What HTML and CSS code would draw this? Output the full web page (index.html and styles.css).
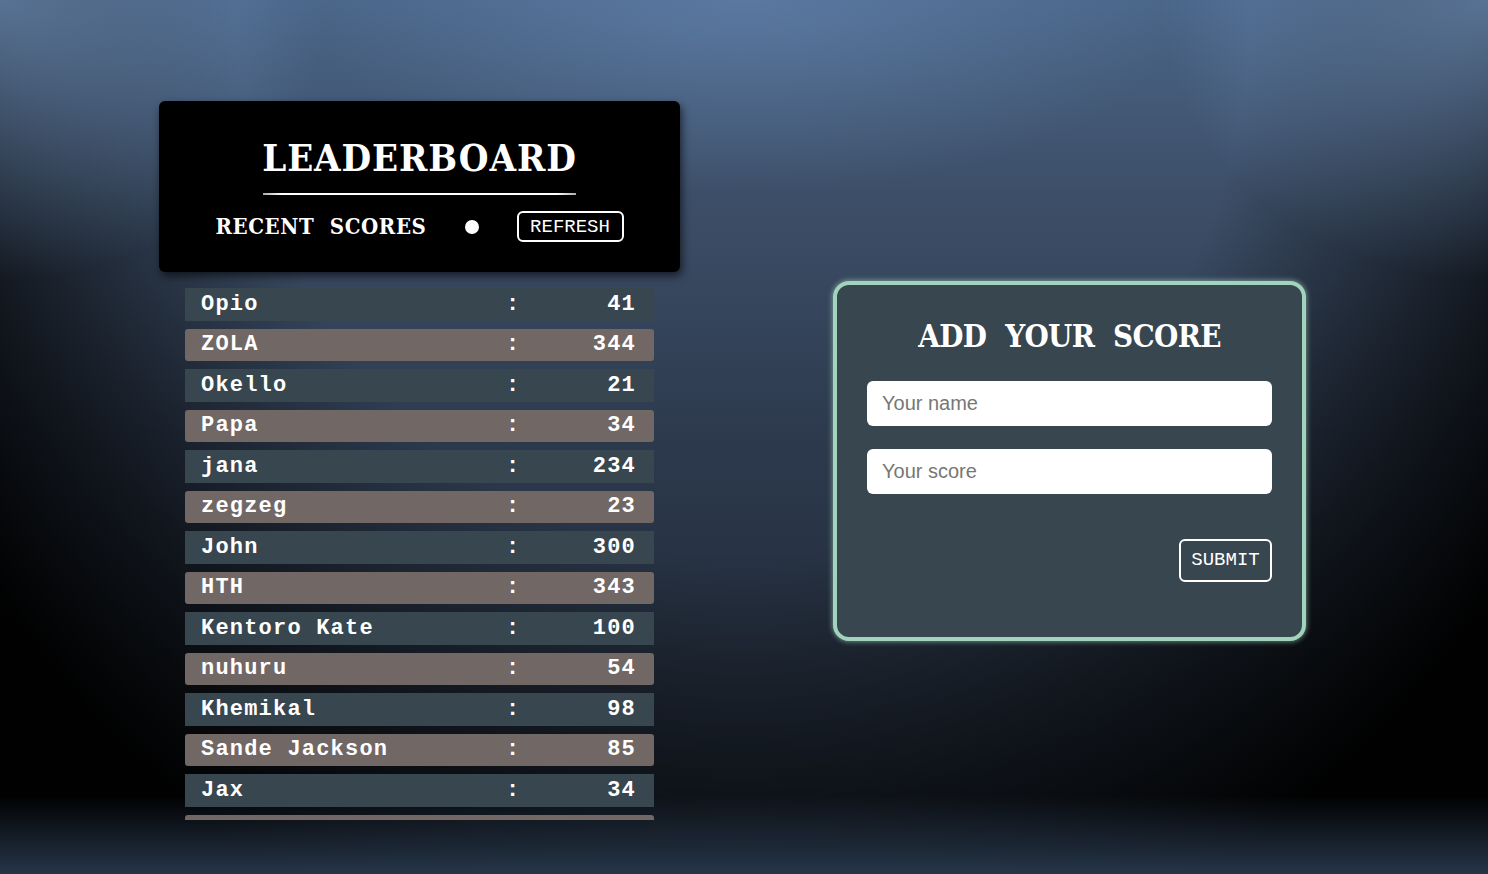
FILE: index.html
```html
<!DOCTYPE html>
<html lang="en">
<head>
<meta charset="utf-8">
<title>Leaderboard</title>
<link rel="stylesheet" href="styles.css">
</head>
<body>
<main class="page">
  <section class="board">
    <header class="board-head">
      <h1 class="board-title">LEADERBOARD</h1>
      <div class="title-rule"></div>
      <div class="recent-bar">
        <h2 class="recent-title">RECENT SCORES</h2>
        <span class="dot"></span>
        <button class="btn refresh" type="button">REFRESH</button>
      </div>
    </header>
    <ul class="scores">
      <li class="score-row"><span class="name">Opio</span><span class="sep">:</span><span class="pts">41</span></li>
      <li class="score-row"><span class="name">ZOLA</span><span class="sep">:</span><span class="pts">344</span></li>
      <li class="score-row"><span class="name">Okello</span><span class="sep">:</span><span class="pts">21</span></li>
      <li class="score-row"><span class="name">Papa</span><span class="sep">:</span><span class="pts">34</span></li>
      <li class="score-row"><span class="name">jana</span><span class="sep">:</span><span class="pts">234</span></li>
      <li class="score-row"><span class="name">zegzeg</span><span class="sep">:</span><span class="pts">23</span></li>
      <li class="score-row"><span class="name">John</span><span class="sep">:</span><span class="pts">300</span></li>
      <li class="score-row"><span class="name">HTH</span><span class="sep">:</span><span class="pts">343</span></li>
      <li class="score-row"><span class="name">Kentoro Kate</span><span class="sep">:</span><span class="pts">100</span></li>
      <li class="score-row"><span class="name">nuhuru</span><span class="sep">:</span><span class="pts">54</span></li>
      <li class="score-row"><span class="name">Khemikal</span><span class="sep">:</span><span class="pts">98</span></li>
      <li class="score-row"><span class="name">Sande Jackson</span><span class="sep">:</span><span class="pts">85</span></li>
      <li class="score-row"><span class="name">Jax</span><span class="sep">:</span><span class="pts">34</span></li>
      <li class="score-row score-row--peek" aria-hidden="true"></li>
    </ul>
  </section>
  <section class="add-card">
    <h2 class="add-title">ADD YOUR SCORE</h2>
    <form class="add-form">
      <input class="field" type="text" placeholder="Your name">
      <input class="field" type="text" placeholder="Your score">
      <div class="actions">
        <button class="btn submit" type="button">SUBMIT</button>
      </div>
    </form>
  </section>
</main>
</body>
</html>
```
FILE: styles.css
```css
* { box-sizing: border-box; }

html, body {
  margin: 0;
  height: 100%;
}

body {
  overflow: hidden;
  color: #fff;
  font-family: "Courier New", "Nimbus Mono PS", "FreeMono", "Liberation Mono", monospace;
  background:
    radial-gradient(ellipse 22% 32% at 0% 0%, rgba(125, 160, 205, 0.6), rgba(125, 160, 205, 0) 100%),
    radial-gradient(ellipse 22% 32% at 100% 0%, rgba(125, 160, 205, 0.6), rgba(125, 160, 205, 0) 100%),
    radial-gradient(ellipse 30% 22% at 50% 0%, rgba(110, 145, 190, 0.45), rgba(110, 145, 190, 0) 100%),
    linear-gradient(to bottom, rgba(40, 56, 76, 0) 91%, rgba(40, 56, 76, 0.95) 100%),
    radial-gradient(ellipse 62% 115% at 50% 0%, rgba(0, 0, 0, 0) 55%, rgba(0, 0, 0, 0.97) 100%),
    linear-gradient(to bottom, #4a6588 0%, #3d4f68 22%, #2d3a4e 50%, #222c3a 78%, #1b2430 100%);
}

.page {
  display: flex;
  align-items: center;
  gap: 153px;
  padding: 101px 0 54px 159px;
  height: 100%;
}

/* ---------- leaderboard ---------- */
.board {
  width: 521px;
  display: flex;
  flex-direction: column;
  align-items: center;
  gap: 16px;
}

.board-head {
  width: 521px;
  background: #000;
  border-radius: 6px;
  box-shadow: 2px 4px 8px rgba(0, 0, 0, 0.6);
  padding: 33px 0 30px;
  display: flex;
  flex-direction: column;
  align-items: center;
}

.board-title,
.recent-title,
.add-title {
  margin: 0;
  font-family: "DejaVu Serif Condensed", "DejaVu Serif", "Liberation Serif", serif;
  font-stretch: semi-condensed;
  font-weight: bold;
}

.board-title {
  font-size: 38px;
  line-height: 48px;
  letter-spacing: 0.9px;
}

.title-rule {
  width: 313px;
  height: 2px;
  margin-top: 11px;
  background: linear-gradient(to right, #aaa 0%, #fff 6%, #fff 94%, #aaa 100%);
}

.recent-bar {
  display: flex;
  align-items: center;
  gap: 38px;
  margin-top: 16px;
}

.recent-title {
  font-size: 22px;
  line-height: 31px;
  word-spacing: 8px;
  letter-spacing: 0.6px;
}

.dot {
  width: 14px;
  height: 14px;
  border-radius: 50%;
  background: #fff;
}

.btn {
  font-family: "Courier New", "Nimbus Mono PS", "FreeMono", "Liberation Mono", monospace;
  color: #fff;
  background: transparent;
  border: 2.5px solid #fff;
  border-radius: 6px;
  cursor: pointer;
}

.refresh {
  width: 107px;
  height: 31px;
  padding: 0;
  font-size: 19px;
  line-height: 26px;
}

.scores {
  list-style: none;
  margin: 0;
  padding: 0;
  width: 469px;
  height: 532px;
  overflow: hidden;
  display: flex;
  flex-direction: column;
  gap: 8px;
}

.score-row {
  flex: none;
  height: 32.5px;
  display: flex;
  align-items: center;
  padding: 0 18px 0 16px;
  background: #37464f;
  font-weight: bold;
  font-size: 22px;
  letter-spacing: 1.2px;
}

.score-row:nth-child(even) {
  background: #716764;
  border-radius: 3px;
}

.name {
  width: 305px;
}

.sep {
  flex: 1;
}

.pts {
  text-align: right;
}

/* ---------- add score ---------- */
.add-card {
  width: 473px;
  height: 360px;
  background: #37464f;
  border: 4px solid #a2d3bd;
  border-radius: 16px;
  box-shadow: 0 0 5px 1px rgba(162, 211, 189, 0.55);
  padding: 30px 30px 0;
}

.add-title {
  text-align: center;
  font-size: 31px;
  line-height: 42px;
  word-spacing: 10px;
  letter-spacing: -0.7px;
}

.add-form {
  margin-top: 24px;
  display: flex;
  flex-direction: column;
  gap: 23px;
}

.field {
  width: 100%;
  height: 45px;
  border: none;
  border-radius: 6px;
  background: #fff;
  padding: 0 15px;
  font-family: "Liberation Sans", Arial, sans-serif;
  font-size: 20px;
  color: #333;
  outline: none;
}

.field::placeholder {
  color: #777;
}

.actions {
  display: flex;
  justify-content: flex-end;
  margin-top: 22px;
}

.submit {
  width: 93px;
  height: 43px;
  padding: 0;
  font-size: 19px;
}
```
